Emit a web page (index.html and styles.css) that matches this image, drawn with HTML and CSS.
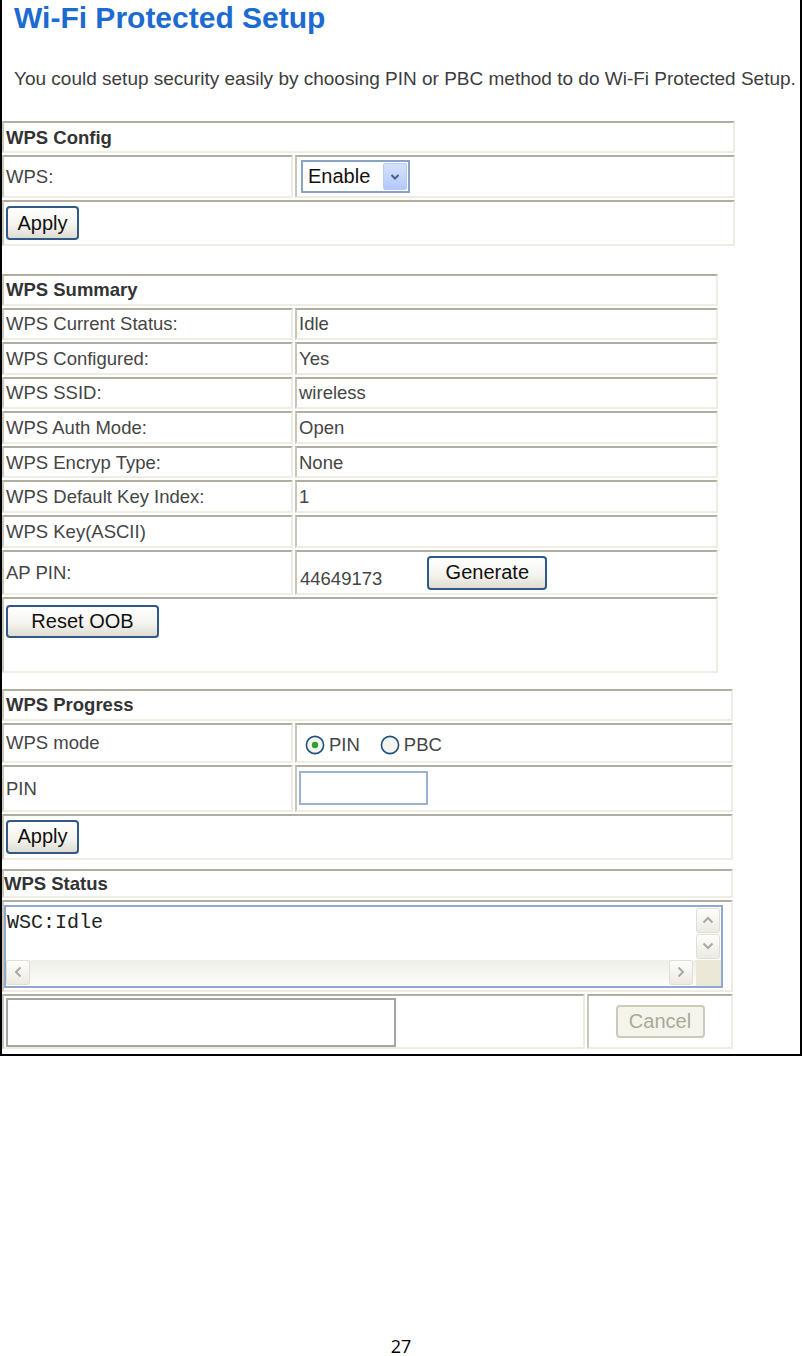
FILE: index.html
```html
<!DOCTYPE html>
<html lang="en">
<head>
    <meta charset="UTF-8">
    <title>Wi-Fi Protected Setup</title>
    <link rel="stylesheet" href="styles.css">
</head>
<body>
    <div class="frame">
        <h1 class="title">Wi-Fi Protected Setup</h1>
        <p class="intro">You could setup security easily by choosing PIN or PBC method to do Wi-Fi Protected Setup.</p>

        <!-- WPS Config -->
        <div class="panel config">
            <div class="cell head">WPS Config</div>
            <div class="cell">WPS:</div>
            <div class="cell">
                <div class="select">
                    <span class="select-text">Enable</span>
                    <span class="select-btn">
                        <svg width="10" height="8" viewBox="0 0 10 8"><polyline points="1.5,2 5,5.5 8.5,2" fill="none" stroke="#4a5f86" stroke-width="2"/></svg>
                    </span>
                </div>
            </div>
            <div class="cell wide"><button class="btn btn-apply">Apply</button></div>
        </div>

        <!-- WPS Summary -->
        <div class="panel summary">
            <div class="cell head">WPS Summary</div>
            <div class="cell">WPS Current Status:</div>
            <div class="cell">Idle</div>
            <div class="cell">WPS Configured:</div>
            <div class="cell">Yes</div>
            <div class="cell">WPS SSID:</div>
            <div class="cell">wireless</div>
            <div class="cell">WPS Auth Mode:</div>
            <div class="cell">Open</div>
            <div class="cell">WPS Encryp Type:</div>
            <div class="cell">None</div>
            <div class="cell">WPS Default Key Index:</div>
            <div class="cell">1</div>
            <div class="cell">WPS Key(ASCII)</div>
            <div class="cell"></div>
            <div class="cell">AP PIN:</div>
            <div class="cell pin-cell">
                <span class="pin-num">44649173</span>
                <button class="btn btn-generate">Generate</button>
            </div>
            <div class="cell wide top-cell"><button class="btn btn-reset">Reset OOB</button></div>
        </div>

        <!-- WPS Progress -->
        <div class="panel progress">
            <div class="cell head">WPS Progress</div>
            <div class="cell">WPS mode</div>
            <div class="cell">
                <label class="radio">
                    <svg width="20" height="20" viewBox="0 0 20 20"><circle cx="10" cy="10" r="8.6" fill="#f3f3ef" stroke="#22507e" stroke-width="1.6"/><circle cx="10" cy="10" r="3.2" fill="#2aa52a"/></svg>
                    <span>PIN</span>
                </label>
                <label class="radio">
                    <svg width="20" height="20" viewBox="0 0 20 20"><circle cx="10" cy="10" r="8.6" fill="#f3f3ef" stroke="#22507e" stroke-width="1.6"/></svg>
                    <span>PBC</span>
                </label>
            </div>
            <div class="cell">PIN</div>
            <div class="cell"><div class="text-input"></div></div>
            <div class="cell wide"><button class="btn btn-apply">Apply</button></div>
        </div>

        <!-- WPS Status -->
        <div class="panel status">
            <div class="cell head">WPS Status</div>
            <div class="cell wide top-cell log-cell">
                <div class="log">
                    <div class="log-text">WSC:Idle</div>
                    <div class="vscroll">
                        <span class="sbtn"><svg width="14" height="10" viewBox="0 0 14 10"><polyline points="2.5,7.5 7,3 11.5,7.5" fill="none" stroke="#aaa9a0" stroke-width="2"/></svg></span>
                        <span class="sbtn"><svg width="14" height="10" viewBox="0 0 14 10"><polyline points="2.5,2.5 7,7 11.5,2.5" fill="none" stroke="#aaa9a0" stroke-width="2"/></svg></span>
                    </div>
                    <div class="hscroll">
                        <span class="sbtn"><svg width="10" height="14" viewBox="0 0 10 14"><polyline points="7.5,2.5 3,7 7.5,11.5" fill="none" stroke="#aaa9a0" stroke-width="2"/></svg></span>
                        <span class="sbtn sbtn-right"><svg width="10" height="14" viewBox="0 0 10 14"><polyline points="2.5,2.5 7,7 2.5,11.5" fill="none" stroke="#aaa9a0" stroke-width="2"/></svg></span>
                    </div>
                    <div class="corner"></div>
                </div>
            </div>
            <div class="cell top-cell"><div class="out-box"></div></div>
            <div class="cell center-cell"><button class="btn btn-cancel" disabled>Cancel</button></div>
        </div>
    </div>

    <div class="page-num">27</div>
</body>
</html>
```

FILE: styles.css
```css
body {
    margin: 0;
    font-family: "Liberation Sans", Arial, sans-serif;
    color: #454545;
    background-color: #fff;
}
.frame {
    width: 802px;
    box-sizing: border-box;
    border: 2px solid #000;
    border-top: none;
    padding-bottom: 5px;
}
.title {
    margin: 0;
    padding: 1px 0 0 12px;
    font-size: 30px;
    line-height: 34px;
    font-weight: bold;
    color: #1c6bd0;
}
.intro {
    margin: 33px 0 0;
    padding-left: 12px;
    font-size: 19px;
    line-height: 22px;
    white-space: nowrap;
    color: #3d3d3d;
}

/* Panels (old style form tables) */
.panel {
    display: grid;
    grid-template-columns: 291px 1fr;
    gap: 2px;
    font-size: 18.5px;
    line-height: 21px;
}
.config {
    width: 733px;
    margin-top: 31px;
    grid-template-rows: 32px 43px 46px;
}
.summary {
    width: 716px;
    margin-top: 28px;
    grid-template-rows: 31.5px repeat(7, 32.6px) 45px 76px;
}
.progress {
    width: 731px;
    margin-top: 16px;
    grid-template-rows: 32px 40px 47px 46px;
}
.status {
    width: 731px;
    margin-top: 9px;
    grid-template-columns: 583px 1fr;
    grid-template-rows: 29px 92px 55px;
}
.cell {
    display: flex;
    align-items: center;
    box-sizing: border-box;
    min-width: 0;
    padding: 0 2px;
    border: 2px solid;
    border-color: #b0ada1 #efede3 #efede3 #c8c5b9;
    white-space: nowrap;
}
.head {
    grid-column: 1 / -1;
    font-weight: bold;
    color: #333;
}
.status .head {
    padding-left: 0;
}
.wide {
    grid-column: 1 / -1;
}
.top-cell {
    align-items: flex-start;
    padding-top: 6px;
}
.center-cell {
    justify-content: center;
}

/* Buttons */
.btn {
    box-sizing: border-box;
    height: 34px;
    padding: 0;
    font-family: "Liberation Sans", Arial, sans-serif;
    font-size: 20px;
    color: #111;
    border: 2px solid #2f5a88;
    border-radius: 4px;
    background: linear-gradient(#ffffff, #f5f4ef 55%, #dedcd2);
}
.btn-apply {
    width: 73px;
}
.btn-generate {
    width: 120px;
    margin-left: 45px;
}
.btn-reset {
    width: 153px;
    height: 33px;
}
.btn-cancel {
    width: 89px;
    height: 33px;
    color: #aca899;
    border-color: #cdcabc;
    background: #f5f4ea;
}

/* Select */
.select {
    display: flex;
    box-sizing: border-box;
    width: 109px;
    height: 33px;
    margin-left: 2px;
    border: 2px solid #8aa3c6;
    background-color: #fff;
}
.select-text {
    flex: 1;
    padding-left: 5px;
    font-size: 20px;
    line-height: 29px;
    color: #111;
}
.select-btn {
    display: flex;
    align-items: center;
    justify-content: center;
    width: 24px;
    margin: 1px;
    box-sizing: border-box;
    border: 1px solid #b8cbf5;
    border-radius: 2px;
    background: linear-gradient(#d6e2fd, #b3c8fa);
}

/* AP PIN */
.pin-cell {
    align-items: flex-start;
    padding-top: 4px;
}
.pin-num {
    margin-top: 12px;
    padding-left: 1px;
}

/* Radios and input */
.radio {
    display: flex;
    align-items: center;
    gap: 4px;
    margin-top: 4px;
}
.radio:first-child {
    margin-left: 6px;
    margin-right: 20px;
}
.text-input {
    box-sizing: border-box;
    width: 129px;
    height: 34px;
    border: 2px solid #9cb1cd;
    background-color: #fff;
}

/* Status log */
.log-cell {
    padding: 3px 0 0 0;
}
.log {
    display: grid;
    grid-template-columns: 1fr 25px;
    grid-template-rows: 1fr 26px;
    box-sizing: border-box;
    width: 719px;
    height: 83px;
    border: 2px solid #8ea8cf;
    background-color: #fff;
}
.log-text {
    padding: 4px 0 0 1px;
    font-family: "Liberation Mono", "Courier New", monospace;
    font-size: 20px;
    line-height: 23px;
    color: #222;
}
.vscroll {
    display: flex;
    flex-direction: column;
    gap: 1px;
    padding-top: 1px;
    background-color: #fbfbf8;
}
.hscroll {
    display: flex;
    justify-content: space-between;
    background: linear-gradient(#efeee7, #fdfdfb);
}
.sbtn {
    display: flex;
    align-items: center;
    justify-content: center;
    box-sizing: border-box;
    width: 24px;
    height: 25px;
    border: 1px solid #e0dfd6;
    border-radius: 3px;
    background: linear-gradient(#fdfdfb, #eceae2);
}
.sbtn-right {
    margin-right: 3px;
}
.corner {
    background-color: #ebe8d7;
}
.out-box {
    box-sizing: border-box;
    width: 390px;
    height: 49px;
    margin-top: -4px;
    border: 2px solid #a5a5a5;
}

.page-num {
    width: 802px;
    margin-top: 281px;
    font-family: "Open Sans", sans-serif;
    font-size: 18px;
    line-height: 18px;
    text-align: center;
    color: #000;
}
```
